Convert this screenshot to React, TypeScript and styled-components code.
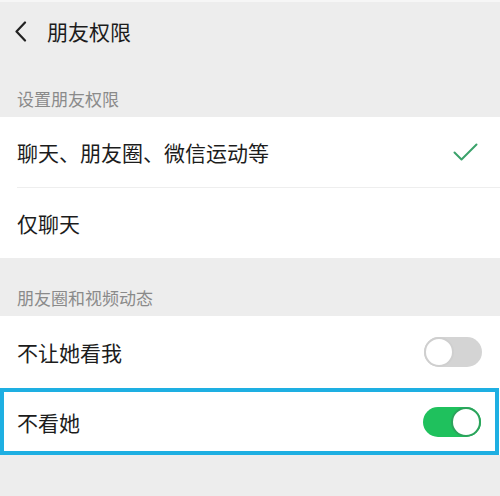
import styled, { createGlobalStyle } from "styled-components";

const GlobalStyle = createGlobalStyle`
  html, body {
    margin: 0;
    padding: 0;
    background: #ededed;
  }
  body {
    font-family: "Noto Sans CJK SC", "Noto Sans", sans-serif;
  }
`;

const Page = styled.div`
  min-height: 100vh;
  background: #ededed;
  display: flex;
  flex-direction: column;
`;

const Header = styled.div`
  height: 57px;
  border-top: 2px solid #f6f6f6;
  display: flex;
  align-items: center;
  padding-left: 14px;
`;

const BackButton = styled.svg`
  width: 13px;
  height: 21px;
  margin-top: 2px;
`;

const Title = styled.div`
  margin-left: 20px;
  font-size: 21px;
  color: #1c1c1c;
  line-height: 24px;
`;

const SectionLabel = styled.div`
  height: 58px;
  box-sizing: border-box;
  display: flex;
  align-items: flex-end;
  padding: 0 0 8px 17px;
  font-size: 17px;
  line-height: 20px;
  color: #8a8a8a;
`;

const List = styled.div`
  background: #fff;
  display: flex;
  flex-direction: column;
`;

const Row = styled.div<{ $h: number; $divider?: boolean; $marked?: boolean }>`
  position: relative;
  height: ${(p) => p.$h}px;
  box-sizing: border-box;
  display: flex;
  align-items: center;
  justify-content: space-between;
  padding: 0 18px 0 17px;
  font-size: 21px;
  color: #1c1c1c;
  background: #fff;
  ${(p) =>
    p.$divider &&
    `
    &::before {
      content: "";
      position: absolute;
      top: 0;
      left: 17px;
      right: 0;
      height: 1px;
      background: #eeeeee;
    }
  `}
  ${(p) =>
    p.$marked &&
    `
    width: calc(100% - 1px);
    border: 4px solid #1eafe2;
    padding: 0 14px 0 13px;
  `}
`;

const Check = styled.svg`
  width: 25px;
  height: 19px;
  margin-right: 4px;
`;

const Switch = styled.div<{ $on: boolean }>`
  width: 58px;
  height: 30px;
  box-sizing: border-box;
  border-radius: 15px;
  background: ${(p) => (p.$on ? "#1fc15d" : "#d4d4d4")};
  position: relative;
  flex-shrink: 0;

  &::after {
    content: "";
    position: absolute;
    top: 0;
    ${(p) => (p.$on ? "right: 0;" : "left: 0;")}
    width: 30px;
    height: 30px;
    box-sizing: border-box;
    border-radius: 50%;
    background: #fff;
    border: 2px solid ${(p) => (p.$on ? "#2ca35c" : "#cfcfcf")};
  }
`;

export default function App() {
  return (
    <Page>
      <GlobalStyle />
      <Header>
        <BackButton viewBox="0 0 13 21">
          <path
            d="M11 1.5 L2.5 10.5 L11 19.5"
            fill="none"
            stroke="#222"
            strokeWidth="2.2"
            strokeLinecap="round"
            strokeLinejoin="round"
          />
        </BackButton>
        <Title>朋友权限</Title>
      </Header>

      <SectionLabel>设置朋友权限</SectionLabel>
      <List>
        <Row $h={70}>
          聊天、朋友圈、微信运动等
          <Check viewBox="0 0 25 19">
            <path
              d="M1.5 9.5 L8.5 16.5 L23.5 1.5"
              fill="none"
              stroke="#3ba26b"
              strokeWidth="2"
              strokeLinecap="round"
              strokeLinejoin="round"
            />
          </Check>
        </Row>
        <Row $h={71} $divider>
          仅聊天
        </Row>
      </List>

      <SectionLabel>朋友圈和视频动态</SectionLabel>
      <List>
        <Row $h={72}>
          不让她看我
          <Switch $on={false} />
        </Row>
        <Row $h={67} $marked>
          不看她
          <Switch $on />
        </Row>
      </List>
    </Page>
  );
}
